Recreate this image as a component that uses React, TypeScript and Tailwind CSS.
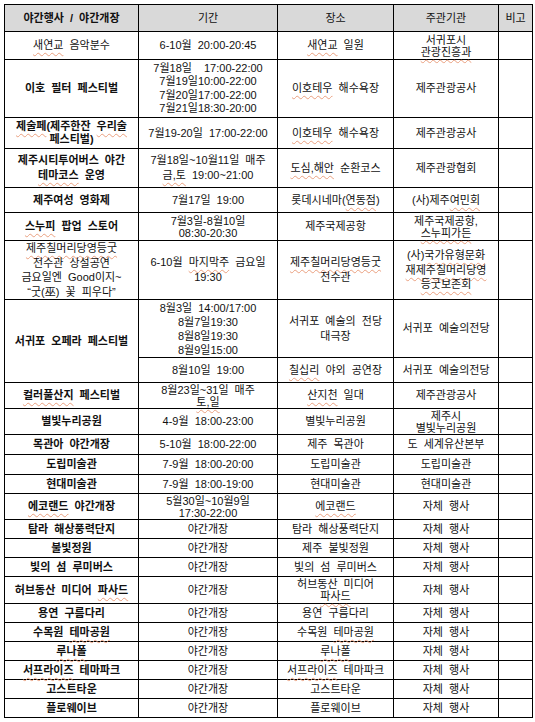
import type { ReactNode } from "react";

// spell-check style wavy underline seen in the source document
const U = ({ children }: { children: ReactNode }) => (
  <span className="underline decoration-wavy decoration-[#eaa080] decoration-1 underline-offset-[3px]">{children}</span>
);

type Row = {
  h: string
  name: ReactNode
  bold?: boolean
  period: ReactNode
  place: ReactNode
  host: ReactNode
}

const rows: Row[] = [
  { h: "h-[28px]", name: <><U>새연교</U> 음악분수</>, period: "6-10월 20:00-20:45", place: <><U>새연교</U> 일원</>, host: <span className="block leading-[12px]">서귀포시<br /><U>관광진흥과</U></span> },
  {
    h: "h-[58px]", name: "이호 필터 페스티벌", bold: true,
    period: <span className="leading-[13.3px] block">7월18일&nbsp; 17:00-22:00<br />7월19일10:00-22:00<br />7월20일17:00-22:00<br />7월21일18:30-20:00</span>,
    place: <><U>이호테우</U> 해수욕장</>, host: "제주관광공사",
  },
  { h: "h-[31px]", name: <span className="block leading-[13px]"><U>제술페</U>(제주한잔 <U>우리술</U><br />페스티벌)</span>, bold: true, period: "7월19-20일 17:00-22:00", place: <><U>이호테우</U> 해수욕장</>, host: "제주관광공사" },
  { h: "h-[39px]", name: <span className="block leading-[15px]">제주시티투어버스 야간<br /><U>테마코스</U> 운영</span>, bold: true, period: <span className="block leading-[15px]">7월18일~10월11일 매주<br /><U>금,토</U> 19:00~21:00</span>, place: <><U>도심,해안</U> 순환코스</>, host: "제주관광협회" },
  { h: "h-[25px]", name: "제주여성 영화제", bold: true, period: "7월17일 19:00", place: <>롯데시네마(<U>연동점</U>)</>, host: <>(사)제주<U>여민회</U></> },
  { h: "h-[28px]", name: <><U>스누피</U> 팝업 스토어</>, bold: true, period: <span className="block leading-[12px]">7월3일-8월10일<br />08:30-20:30</span>, place: "제주국제공항", host: <span className="block leading-[12px]">제주국제공항,<br /><U>스누피가든</U></span> },
  {
    h: "h-[58px]",
    name: <span className="leading-[14.5px] block"><U>제주칠머리당영등굿</U><br />전수관 상설공연<br />금요일엔 Good이지~<br />“굿(巫) 꽃 피우다”</span>,
    period: <span className="block leading-[15px]">6-10월 <U>마지막주</U> 금요일<br />19:30</span>,
    place: <span className="block leading-[15px]"><U>제주칠머리당영등굿</U><br />전수관</span>,
    host: <span className="leading-[14.5px] block">(사)<U>국가유형문화</U><br /><U>재제주칠머리당영</U><br /><U>등굿보존회</U></span>,
  },
]

const rows2: Row[] = [
  { h: "h-[26px]", name: <><U>컬러풀산지</U> 페스티벌</>, bold: true, period: <span className="block leading-[12px]">8월23일~31일 매주<br /><U>토,일</U></span>, place: <><U>산지천</U> 일대</>, host: "제주관광공사" },
  { h: "h-[26px]", name: "별빛누리공원", bold: true, period: "4-9월 18:00-23:00", place: "별빛누리공원", host: <span className="block leading-[12px]">제주시<br />별빛누리공원</span> },
  { h: "h-[20px]", name: "목관아 야간개장", bold: true, period: "5-10월 18:00-22:00", place: "제주 목관아", host: "도 세계유산본부" },
  { h: "h-[20px]", name: "도립미술관", bold: true, period: "7-9월 18:00-20:00", place: "도립미술관", host: "도립미술관" },
  { h: "h-[19px]", name: "현대미술관", bold: true, period: "7-9월 18:00-19:00", place: "현대미술관", host: "현대미술관" },
  { h: "h-[26px]", name: <><U>에코랜드</U> 야간개장</>, bold: true, period: <span className="block leading-[12px]">5월30일~10월9일<br />17:30-22:00</span>, place: <U>에코랜드</U>, host: "자체 행사" },
  { h: "h-[19px]", name: "탐라 해상풍력단지", bold: true, period: "야간개장", place: "탐라 해상풍력단지", host: "자체 행사" },
  { h: "h-[19px]", name: "불빛정원", bold: true, period: "야간개장", place: "제주 불빛정원", host: "자체 행사" },
  { h: "h-[19px]", name: "빛의 섬 루미버스", bold: true, period: "야간개장", place: "빛의 섬 루미버스", host: "자체 행사" },
  { h: "h-[27px]", name: <>허브동산 미디어 <U>파사드</U></>, bold: true, period: "야간개장", place: <span className="block leading-[12px]">허브동산 미디어<br /><U>파사드</U></span>, host: "자체 행사" },
  { h: "h-[19px]", name: "용연 구름다리", bold: true, period: "야간개장", place: "용연 구름다리", host: "자체 행사" },
  { h: "h-[19px]", name: <>수목원 <U>테마공원</U></>, bold: true, period: "야간개장", place: <>수목원 <U>테마공원</U></>, host: "자체 행사" },
  { h: "h-[19px]", name: <U>루나폴</U>, bold: true, period: "야간개장", place: <U>루나폴</U>, host: "자체 행사" },
  { h: "h-[19px]", name: <><U>서프라이즈</U> 테마파크</>, bold: true, period: "야간개장", place: <><U>서프라이즈</U> 테마파크</>, host: "자체 행사" },
  { h: "h-[19px]", name: "고스트타운", bold: true, period: "야간개장", place: "고스트타운", host: "자체 행사" },
  { h: "h-[19px]", name: "플로웨이브", bold: true, period: "야간개장", place: "플로웨이브", host: "자체 행사" },
]

const td = "border border-black px-1 py-0 text-center align-middle whitespace-nowrap";

function TableRow({ r }: { r: Row }) {
  return (
    <tr className={r.h}>
      <td className={`${td} ${r.bold ? "font-bold" : ""}`}>{r.name}</td>
      <td className={td}>{r.period}</td>
      <td className={td}>{r.place}</td>
      <td className={td}>{r.host}</td>
      <td className={td}></td>
    </tr>
  );
}

export default function App() {
  return (
    <div className="min-h-screen bg-white p-1 text-[#111]">
      <table className="w-[528px] table-fixed border-collapse text-[11px] leading-[13px] [word-spacing:3px] font-['Liberation_Sans','Noto_Sans_CJK_KR',sans-serif]">
        <colgroup>
          <col className="w-[134px]" />
          <col className="w-[139px]" />
          <col className="w-[116px]" />
          <col className="w-[105px]" />
          <col className="w-[34px]" />
        </colgroup>
        <thead>
          <tr className="h-[27px] bg-[#d9d9d9]">
            <th className={`${td} font-bold`}>야간행사 / 야간개장</th>
            <th className={`${td} font-normal`}>기간</th>
            <th className={`${td} font-normal`}>장소</th>
            <th className={`${td} font-normal`}>주관기관</th>
            <th className={`${td} font-normal`}>비고</th>
          </tr>
        </thead>
        <tbody>
          {rows.map((r, i) => <TableRow key={i} r={r} />)}

          {/* 서귀포 오페라 페스티벌: two date rows */}
          <tr className="h-[58px]">
            <td rowSpan={2} className={`${td} font-bold`}>서귀포 오페라 페스티벌</td>
            <td className={td}>
              <span className="block leading-[14px]">8월3일 14:00/17:00<br />8월7일19:30<br />8월8일19:30<br />8월9일15:00</span>
            </td>
            <td className={td}><span className="block leading-[15px]">서귀포 예술의 전당<br />대극장</span></td>
            <td className={td}>서귀포 예술의전당</td>
            <td className={td}></td>
          </tr>
          <tr className="h-[25px]">
            <td className={td}>8월10일 19:00</td>
            <td className={td}><U>칠십리</U> 야외 공연장</td>
            <td className={td}>서귀포 예술의전당</td>
            <td className={td}></td>
          </tr>

          {rows2.map((r, i) => <TableRow key={i} r={r} />)}
        </tbody>
      </table>
    </div>
  );
}
